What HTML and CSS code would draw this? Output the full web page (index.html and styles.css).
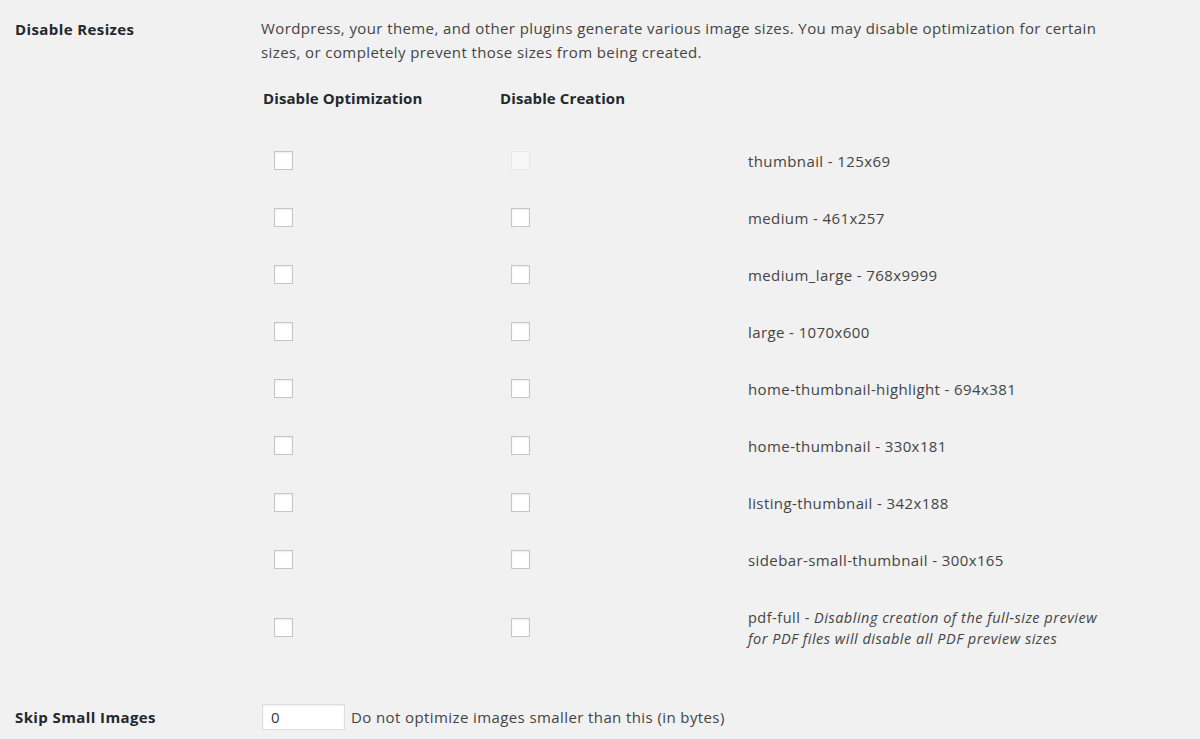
FILE: index.html
```html
<!DOCTYPE html>
<html>
<head>
<meta charset="utf-8">
<link rel="stylesheet" href="styles.css">
</head>
<body>
<div class="form">
  <div class="row">
    <div class="th">Disable Resizes</div>
    <div class="td">
      <p class="desc">Wordpress, your theme, and other plugins generate various image sizes. You may disable optimization for certain sizes, or completely prevent those sizes from being created.</p>
      <div class="sizes">
        <div class="srow head">
          <div class="c1"><b>Disable Optimization</b></div>
          <div class="c2"><b>Disable Creation</b></div>
          <div class="c3"></div>
        </div>
        <div class="srow">
          <div class="c1"><input type="checkbox" class="cb"></div>
          <div class="c2"><input type="checkbox" class="cb" disabled></div>
          <div class="c3">thumbnail - 125x69</div>
        </div>
        <div class="srow">
          <div class="c1"><input type="checkbox" class="cb"></div>
          <div class="c2"><input type="checkbox" class="cb"></div>
          <div class="c3">medium - 461x257</div>
        </div>
        <div class="srow">
          <div class="c1"><input type="checkbox" class="cb"></div>
          <div class="c2"><input type="checkbox" class="cb"></div>
          <div class="c3">medium_large - 768x9999</div>
        </div>
        <div class="srow">
          <div class="c1"><input type="checkbox" class="cb"></div>
          <div class="c2"><input type="checkbox" class="cb"></div>
          <div class="c3">large - 1070x600</div>
        </div>
        <div class="srow">
          <div class="c1"><input type="checkbox" class="cb"></div>
          <div class="c2"><input type="checkbox" class="cb"></div>
          <div class="c3">home-thumbnail-highlight - 694x381</div>
        </div>
        <div class="srow">
          <div class="c1"><input type="checkbox" class="cb"></div>
          <div class="c2"><input type="checkbox" class="cb"></div>
          <div class="c3">home-thumbnail - 330x181</div>
        </div>
        <div class="srow">
          <div class="c1"><input type="checkbox" class="cb"></div>
          <div class="c2"><input type="checkbox" class="cb"></div>
          <div class="c3">listing-thumbnail - 342x188</div>
        </div>
        <div class="srow">
          <div class="c1"><input type="checkbox" class="cb"></div>
          <div class="c2"><input type="checkbox" class="cb"></div>
          <div class="c3">sidebar-small-thumbnail - 300x165</div>
        </div>
        <div class="srow tall">
          <div class="c1"><input type="checkbox" class="cb"></div>
          <div class="c2"><input type="checkbox" class="cb"></div>
          <div class="c3 small">pdf-full - <i>Disabling creation of the full-size preview for PDF files will disable all PDF preview sizes</i></div>
        </div>
      </div>
    </div>
  </div>
  <div class="row skip">
    <div class="th">Skip Small Images</div>
    <div class="td inline">
      <input type="text" class="num" value="0">
      <span class="note">Do not optimize images smaller than this (in bytes)</span>
    </div>
  </div>
</div>
</body>
</html>
```

FILE: styles.css
```css
html, body {
  margin: 0;
  padding: 0;
  background: #f1f1f1;
}
body {
  font-family: "Open Sans", "Liberation Sans", Arial, sans-serif;
  font-size: 15px;
  letter-spacing: 0.4px;
  color: #444;
  height: 739px;
  overflow: hidden;
}
b {
  letter-spacing: 0.1px;
}
.form {
  display: flex;
  flex-direction: column;
}
.row {
  display: flex;
}
.th {
  width: 246px;
  padding-left: 15px;
  padding-top: 17px;
  line-height: 24px;
  font-weight: 700;
  letter-spacing: 0.4px;
  color: #23282d;
  flex: none;
}
.td {
  flex: 1;
  padding-top: 17px;
}
.desc {
  margin: 0;
  line-height: 23.5px;
  width: 860px;
}
.sizes {
  display: flex;
  flex-direction: column;
}
.srow {
  display: grid;
  grid-template-columns: 237px 237px 1fr;
  height: 57px;
  align-items: center;
}
.srow.head {
  height: 68px;
}
.srow.head b {
  color: #23282d;
  font-weight: 700;
  padding-left: 2px;
}
.srow.tall {
  height: 79px;
}
.c3 {
  padding-left: 13px;
}
.c3.small {
  font-size: 14.5px;
  letter-spacing: 0.5px;
  line-height: 21px;
  width: 372px;
}
.cb {
  -webkit-appearance: none;
  appearance: none;
  width: 19px;
  height: 19px;
  margin: 0 0 0 13px;
  background: #fff;
  border: 1px solid #c6c6c6;
  box-shadow: inset 0 1px 2px rgba(0,0,0,0.08);
  box-sizing: border-box;
  display: block;
}
.cb:disabled {
  background: #f6f6f6;
  border-color: #e8e8e8;
  box-shadow: none;
}
.skip {
  margin-top: 37px;
  align-items: center;
}
.skip .th {
  padding-top: 0;
}
.inline {
  display: flex;
  align-items: center;
  padding-top: 0;
  gap: 6px;
}
.num {
  width: 83px;
  height: 26px;
  box-sizing: border-box;
  border: 1px solid #ddd;
  box-shadow: inset 0 1px 2px rgba(0,0,0,0.07);
  background: #fff;
  font-family: inherit;
  font-size: 15px;
  color: #32373c;
  padding: 0 8px;
  margin: 0 0 0 1px;
}
.note {
  font-size: 15px;
}
```
